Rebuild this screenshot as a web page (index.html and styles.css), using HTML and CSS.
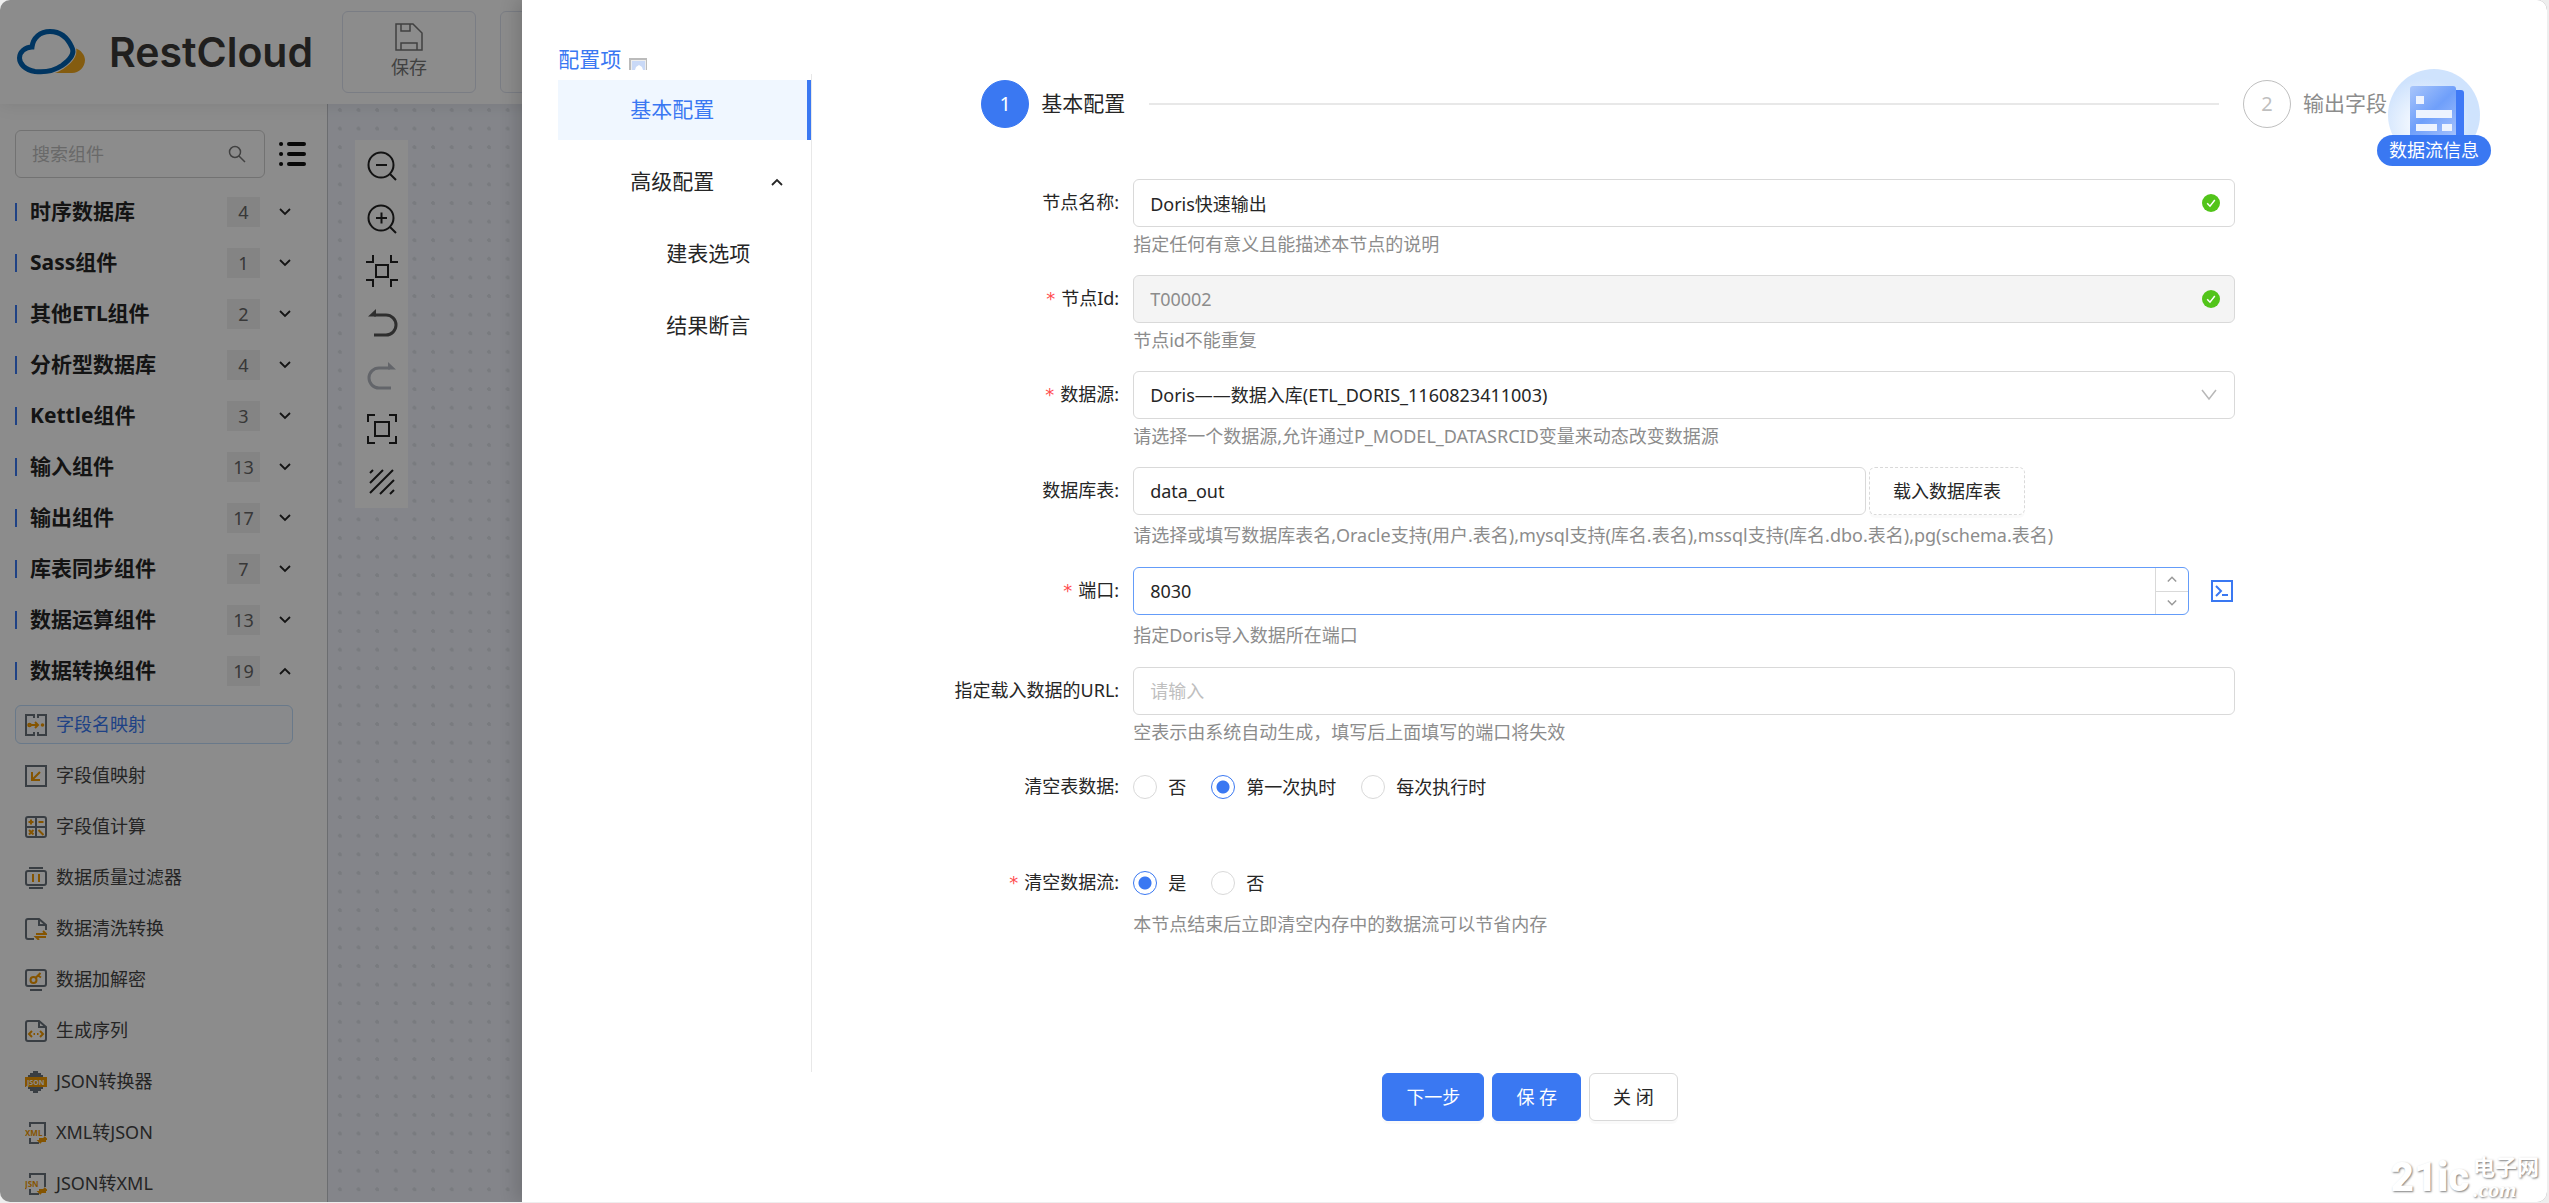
FILE: index.html
```html
<!DOCTYPE html>
<html lang="zh-CN">
<head>
    <meta charset="UTF-8">
    <meta name="viewport" content="width=device-width, initial-scale=1.0">
    <title>RestCloud</title>
    <link rel="stylesheet" href="styles.css">
</head>
<body>

    <!-- Shared icons -->
    <svg class="sprite" aria-hidden="true">
        <symbol id="down" viewBox="0 0 12 12"><path d="m1 3 5 5 5-5" fill="none" stroke="currentColor" stroke-width="1.800"/></symbol>
        <symbol id="up" viewBox="0 0 12 12"><path d="m1 9 5-5 5 5" fill="none" stroke="currentColor" stroke-width="1.800"/></symbol>
        <symbol id="check" viewBox="0 0 18 18"><circle cx="9" cy="9" r="9" fill="#52c41a"/><path d="m5.200 9.200 2.800 3 4.800-6.200" fill="none" stroke="#fff" stroke-width="1.500"/></symbol>
    </svg>

    <div class="app">
        <!-- Top Bar -->
        <header class="topbar">
            <div class="logo">
                <svg class="logo-mark" viewBox="0 0 68 46">
                    <path d="M36 44c12-4 21-13 22-25 6 2 10 7 10 12 0 7-6 13-13 13z" fill="#f0a81e"/>
                    <path d="M15 18C16 9 23 2.500 33 2.500c11 0 18 7 22 16 3 6-3 13-10 18-9 6-19 7-27 6C8 41 2.500 35 2.500 29 2.500 23 8 18 15 18z" fill="#fff" stroke="#fff" stroke-width="7"/>
                    <path d="M15 18C16 9 23 2.500 33 2.500c11 0 18 7 22 16 3 6-3 13-10 18-9 6-19 7-27 6C8 41 2.500 35 2.500 29 2.500 23 8 18 15 18z" fill="#fff" stroke="#0062b1" stroke-width="5"/>
                </svg>
                <span>RestCloud</span>
            </div>
            <button class="tool-card" type="button">
                <svg width="28" height="28" viewBox="0 0 28 28" fill="none" stroke="currentColor" stroke-width="1.500"><path d="M1 1h17l9 9v17H1zM6 1v7h9V1M6 27v-7h16v7"/></svg>
                <span>保存</span>
            </button>
            <button class="tool-card" type="button"></button>
        </header>

        <div class="workspace">
            <!-- Component Sidebar -->
            <aside class="sidebar">
                <div class="search-row">
                    <label class="search">
                        <input type="text" placeholder="搜索组件" aria-label="搜索组件">
                        <svg width="18" height="18" viewBox="0 0 18 18" fill="none" stroke="#777" stroke-width="1.500"><circle cx="7" cy="7" r="5.500"/><path d="m11 11 6 6"/></svg>
                    </label>
                    <button class="list-btn" type="button" aria-label="列表">
                        <svg width="29" height="26" viewBox="0 0 29 26" fill="none" stroke="#111" stroke-width="4" stroke-linecap="round"><path d="M3 3h.1M3 13h.1M3 23h.1M11 3h15M11 13h15M11 23h15"/></svg>
                    </button>
                </div>

                <ul class="groups">
                    <li><b>时序数据库</b><i>4</i><svg><use href="#down"/></svg></li>
                    <li><b>Sass组件</b><i>1</i><svg><use href="#down"/></svg></li>
                    <li><b>其他ETL组件</b><i>2</i><svg><use href="#down"/></svg></li>
                    <li><b>分析型数据库</b><i>4</i><svg><use href="#down"/></svg></li>
                    <li><b>Kettle组件</b><i>3</i><svg><use href="#down"/></svg></li>
                    <li><b>输入组件</b><i>13</i><svg><use href="#down"/></svg></li>
                    <li><b>输出组件</b><i>17</i><svg><use href="#down"/></svg></li>
                    <li><b>库表同步组件</b><i>7</i><svg><use href="#down"/></svg></li>
                    <li><b>数据运算组件</b><i>13</i><svg><use href="#down"/></svg></li>
                    <li><b>数据转换组件</b><i>19</i><svg><use href="#up"/></svg></li>
                </ul>

                <ul class="parts">
                    <li class="active">
                        <svg viewBox="0 0 22 22"><path class="g" d="M9 4V1H1v20h8v-3M13 4V1h8v20h-8v-3"/><path class="o" d="M6 11h7M10 8l3 3-3 3"/><circle class="o" cx="4.500" cy="11" r="1.300"/><circle cx="17.500" cy="11" r="1.800" fill="#f39a00"/></svg>
                        字段名映射
                    </li>
                    <li>
                        <svg viewBox="0 0 22 22"><path class="g" d="M1 1h20v20H1z"/><path class="o" d="M7 7v8h8M7 15l8-8"/></svg>
                        字段值映射
                    </li>
                    <li>
                        <svg viewBox="0 0 22 22"><rect class="g" x="1" y="1" width="20" height="20" rx="2"/><path class="g" d="M11 1v20M1 11h20"/><path class="o" d="M3.500 6h5M6 3.500v5M13.500 6h5M4 14l4.500 4.500M8.500 14 4 18.500M13.500 14l5 5"/></svg>
                        字段值计算
                    </li>
                    <li>
                        <svg viewBox="0 0 22 22"><rect class="g" x="1" y="4" width="20" height="14" rx="2"/><path class="g" d="M4 1h14M4 21h14"/><path class="o" d="M8 7v8M14 7v8"/></svg>
                        数据质量过滤器
                    </li>
                    <li>
                        <svg viewBox="0 0 22 22"><path class="g" d="M9 21H3a2 2 0 0 1-2-2V3a2 2 0 0 1 2-2h11l7 6v5M14 1v6h7"/><path class="o" d="M11 16h10l-3-3M21 19H11l3 3"/></svg>
                        数据清洗转换
                    </li>
                    <li>
                        <svg viewBox="0 0 22 22"><rect class="g" x="1" y="1" width="20" height="16" rx="2"/><path class="g" d="M5 21h12"/><circle class="o" cx="8.500" cy="11" r="3"/><path class="o" d="m10.500 9 5-5M13 6.500l3 2"/></svg>
                        数据加解密
                    </li>
                    <li>
                        <svg viewBox="0 0 22 22"><path class="g" d="M3 1h11l7 6v12a2 2 0 0 1-2 2H3a2 2 0 0 1-2-2V3a2 2 0 0 1 2-2zM14 1v6h7"/><path class="o" d="m7 11-3 3 3 3M15 11l3 3-3 3M8.500 14h1.500M12 14h1.500"/></svg>
                        生成序列
                    </li>
                    <li>
                        <svg viewBox="0 0 22 22"><path d="M8 0h5v2h3v2h2v3H3V4h2V2h3zM3 16h15v2h-2v2h-3v2H8v-2H5v-2H3z" fill="#69727b"/><path d="M0 6h22v10H0z" fill="#f39a00"/><text class="tag light" x="2" y="14">JSON</text></svg>
                        JSON转换器
                    </li>
                    <li>
                        <svg viewBox="0 0 22 22"><path class="g" d="M5 5V1h15v13M5 16v5h9"/><text class="tag" x="0" y="14">XML</text><path class="o" d="M14 17h7l-2-2M21 19h-7l2 2"/></svg>
                        XML转JSON
                    </li>
                    <li>
                        <svg viewBox="0 0 22 22"><path class="g" d="M5 5V1h15v13M5 16v5h9"/><text class="tag" x="0" y="14">JSN</text><path class="o" d="M14 17h7l-2-2M21 19h-7l2 2"/></svg>
                        JSON转XML
                    </li>
                </ul>
            </aside>

            <!-- Flow Canvas -->
            <main class="canvas">
                <div class="toolbar">
                    <button type="button" aria-label="缩小"><svg viewBox="0 0 32 32"><circle cx="15" cy="15" r="12.500"/><path d="M10 15h11M24 24l6 6"/></svg></button>
                    <button type="button" aria-label="放大"><svg viewBox="0 0 32 32"><circle cx="15" cy="15" r="12.500"/><path d="M10 15h11M15.500 9.500v11M24 24l6 6"/></svg></button>
                    <button type="button" aria-label="适应内容"><svg viewBox="0 0 32 32" stroke-width="3"><path d="M10 10h12v12H10zM7 0v7H0M25 0v7h7M7 32v-7H0M25 32v-7h7"/></svg></button>
                    <button type="button" aria-label="撤销"><svg viewBox="0 0 32 32"><path d="M8 7h12a10 10 0 0 1 0 20H8" stroke="#555" stroke-width="3"/><path d="M2 8.500 10 1v7.500z" fill="#555" stroke="none"/></svg></button>
                    <button type="button" aria-label="重做"><svg viewBox="0 0 32 32"><path d="M24 7H13a10 10 0 0 0 0 20h12" stroke="#b4b9c2" stroke-width="3"/><path d="M30 8.500 22 1v7.500z" fill="#b4b9c2" stroke="none"/></svg></button>
                    <button type="button" aria-label="全屏"><svg viewBox="0 0 32 32"><path d="M9 9h14v14H9zM2 9V2h7M23 2h7v7M30 23v7h-7M9 30H2v-7"/></svg></button>
                    <button type="button" aria-label="背景"><svg viewBox="0 0 32 32"><path d="M4 7l3-3M4 17 17 4M4 27 27 4M14 28l14-14M24 28l4-4"/></svg></button>
                </div>
            </main>
        </div>

        <div class="mask"></div>

        <!-- Node Settings Drawer -->
        <section class="drawer">
            <nav class="side">
                <div class="side-title">配置项
                    <svg width="18" height="12" viewBox="0 0 18 12"><path d="M0 0h18v12H0z" fill="#bbb"/><path d="M2 2h15v10H2z" fill="#eee"/><path d="M3 3h13v9H3z" fill="#c9d9f7"/><path d="m6 12 1-3 3-2 3 2 1 3z" fill="#fff"/></svg>
                </div>
                <ul class="menu">
                    <li class="active"><a href="#basic">基本配置</a></li>
                    <li><a href="#advanced">高级配置</a><svg><use href="#up"/></svg></li>
                    <li class="sub"><a href="#table">建表选项</a></li>
                    <li class="sub"><a href="#assert">结果断言</a></li>
                </ul>
            </nav>

            <div class="content">
                <ol class="steps">
                    <li class="current"><span class="num">1</span>基本配置</li>
                    <li class="line"></li>
                    <li><span class="num">2</span>输出字段</li>
                </ol>

                <form class="form">
                    <div class="row">
                        <label class="name" for="nodeName">节点名称:</label>
                        <div class="field"><input id="nodeName" type="text" value="Doris快速输出"><svg class="ok"><use href="#check"/></svg></div>
                        <p class="hint">指定任何有意义且能描述本节点的说明</p>
                    </div>
                    <div class="row">
                        <label class="name required" for="nodeId">节点Id:</label>
                        <div class="field disabled"><input id="nodeId" type="text" value="T00002" disabled><svg class="ok"><use href="#check"/></svg></div>
                        <p class="hint">节点id不能重复</p>
                    </div>
                    <div class="row">
                        <label class="name required" for="source">数据源:</label>
                        <div class="field">
                            <select id="source"><option>Doris——数据入库(ETL_DORIS_1160823411003)</option></select>
                            <svg class="arrow" viewBox="0 0 18 18"><path d="m2 4 7 9 7-9" fill="none" stroke="#b8b8b8" stroke-width="1.500"/></svg>
                        </div>
                        <p class="hint">请选择一个数据源,允许通过P_MODEL_DATASRCID变量来动态改变数据源</p>
                    </div>
                    <div class="row tall">
                        <label class="name" for="tableName">数据库表:</label>
                        <div class="line-group table-line">
                            <div class="field"><input id="tableName" type="text" value="data_out"></div>
                            <button class="btn dashed" type="button">载入数据库表</button>
                        </div>
                        <p class="hint">请选择或填写数据库表名,Oracle支持(用户.表名),mysql支持(库名.表名),mssql支持(库名.dbo.表名),pg(schema.表名)</p>
                    </div>
                    <div class="row tall">
                        <label class="name required" for="port">端口:</label>
                        <div class="line-group port-line">
                            <div class="field focused">
                                <input id="port" type="text" inputmode="numeric" value="8030">
                                <div class="spin">
                                    <button type="button" aria-label="增加"><svg><use href="#up"/></svg></button>
                                    <button type="button" aria-label="减少"><svg><use href="#down"/></svg></button>
                                </div>
                            </div>
                            <svg width="22" height="22" viewBox="0 0 22 22" fill="none" stroke="#3a78f2" stroke-width="2"><path d="M1 1h20v20H1zM5 6l5 5-5 5M11 15h6"/></svg>
                        </div>
                        <p class="hint">指定Doris导入数据所在端口</p>
                    </div>
                    <div class="row">
                        <label class="name" for="url">指定载入数据的URL:</label>
                        <div class="field"><input id="url" type="text" placeholder="请输入"></div>
                        <p class="hint">空表示由系统自动生成，填写后上面填写的端口将失效</p>
                    </div>
                    <div class="row">
                        <span class="name">清空表数据:</span>
                        <div class="radios">
                            <label><input type="radio" name="clearTable">否</label>
                            <label><input type="radio" name="clearTable" checked>第一次执时</label>
                            <label><input type="radio" name="clearTable">每次执行时</label>
                        </div>
                        <p class="hint"></p>
                    </div>
                    <div class="row">
                        <span class="name required">清空数据流:</span>
                        <div class="radios">
                            <label><input type="radio" name="clearFlow" checked>是</label>
                            <label><input type="radio" name="clearFlow">否</label>
                        </div>
                        <p class="hint">本节点结束后立即清空内存中的数据流可以节省内存</p>
                    </div>
                </form>

                <div class="actions">
                    <button class="btn primary" type="button">下一步</button>
                    <button class="btn primary" type="button">保 存</button>
                    <button class="btn" type="button">关 闭</button>
                </div>
            </div>

            <button class="flow-info" type="button">
                <svg width="92" height="92" viewBox="0 0 92 92">
                    <defs>
                        <radialGradient id="halo" cx=".4" cy=".6"><stop offset="0" stop-color="#fff"/><stop offset="1" stop-color="#cfe3fd"/></radialGradient>
                        <linearGradient id="doc" x2=".7" y2="1"><stop offset="0" stop-color="#a9c6fb"/><stop offset=".5" stop-color="#6f9ffa"/><stop offset="1" stop-color="#a3c0fc"/></linearGradient>
                    </defs>
                    <circle cx="46" cy="46" r="46" fill="url(#halo)"/>
                    <rect x="60" y="21" width="16" height="60" rx="3" fill="#3f79f6"/>
                    <rect x="22" y="17" width="46" height="62" rx="3" fill="url(#doc)"/>
                    <path d="M28 27h8v8h-8zM28 41h36v8H28zM28 55h21v7H28zM54 55h10v7H54z" fill="#edf3fe"/>
                </svg>
                <span>数据流信息</span>
            </button>
        </section>

        <div class="watermark">
            <strong>21ic</strong>
            <div><span>电子网</span><em>.com</em></div>
        </div>
    </div>

</body>
</html>
```
FILE: styles.css
```css
/* Reset & Global Styles */
* {
    margin: 0;
    padding: 0;
    box-sizing: border-box;
}

body {
    background: #eee;
    color: #262626;
    font-family: "Noto Sans", "Noto Sans CJK SC", sans-serif;
    font-size: 18px;
    line-height: 1.5;
}

ul,
ol {
    list-style: none;
}

a {
    color: inherit;
    text-decoration: none;
}

button,
input,
select {
    font: inherit;
    color: inherit;
    border: 0;
    background: none;
    outline: none;
}

.sprite {
    display: none;
}

.app {
    display: flex;
    flex-direction: column;
    position: relative;
    height: calc(100vh - 1px);
    margin-right: 2px;
    overflow: hidden;
    background: #fff;
    border-radius: 10px;
}

/* Top Bar */
.topbar {
    display: flex;
    align-items: center;
    flex: 0 0 104px;
    gap: 24px;
    padding: 0 17px;
    position: relative;
    z-index: 1;
    box-shadow: 0 2px 16px rgba(0, 0, 0, 0.08);
}

.logo {
    display: flex;
    align-items: center;
    gap: 24px;
    width: 301px;
    font-family: Inter, sans-serif;
    font-size: 41px;
    font-weight: 600;
    line-height: 48px;
    color: #3b3a38;
}

.logo-mark {
    width: 68px;
    height: 46px;
    overflow: visible;
}

.tool-card {
    display: flex;
    flex-direction: column;
    align-items: center;
    justify-content: center;
    gap: 3px;
    width: 134px;
    height: 82px;
    border: 1px solid #dfe3f0;
    border-radius: 6px;
    color: #777;
}

/* Component Sidebar */
.workspace {
    display: flex;
    flex: 1;
    min-height: 0;
}

.sidebar {
    width: 328px;
    padding: 26px 19px 0 15px;
    border-right: 1px solid #c4c6cc;
    overflow: hidden;
}

.search-row {
    display: flex;
    align-items: center;
    gap: 13px;
    margin-bottom: 8px;
}

.search {
    display: flex;
    align-items: center;
    width: 250px;
    height: 48px;
    padding: 0 18px 0 16px;
    border: 1px solid #d0d0d0;
    border-radius: 6px;
}

.search input {
    flex: 1;
    min-width: 0;
}

::placeholder {
    color: #bfbfbf;
}

.list-btn {
    display: flex;
}

.groups li {
    display: flex;
    align-items: center;
    height: 51px;
    padding-right: 17px;
}

.groups li::before {
    content: "";
    width: 2px;
    height: 18px;
    margin-right: 13px;
    background: #3a78f2;
}

.groups b {
    flex: 1;
    font-size: 21px;
}

.groups i {
    width: 33px;
    margin-right: 19px;
    font-style: normal;
    line-height: 30px;
    text-align: center;
    color: #666;
    background: #f0f0f0;
}

.groups svg,
.menu svg {
    width: 12px;
    height: 12px;
}

.parts {
    padding-top: 9px;
}

.parts li {
    display: flex;
    align-items: center;
    gap: 9px;
    width: 278px;
    height: 39px;
    margin-bottom: 12px;
    padding-left: 9px;
    border: 1px solid transparent;
    border-radius: 6px;
    color: #444;
}

.parts .active {
    color: #3a78f2;
    background: #f9fcff;
    border-color: #bfdcfb;
}

.parts svg {
    width: 22px;
    height: 22px;
    fill: none;
    stroke-width: 2;
}

.g {
    stroke: #69727b;
}

.o {
    stroke: #f39a00;
}

.tag {
    font-size: 8px;
    font-weight: 700;
    fill: #f39a00;
}

.light {
    font-size: 7px;
    fill: #fff;
}

/* Flow Canvas */
.canvas {
    flex: 1;
    padding: 36px 27px;
    background-color: #f0f3fb;
    background-image: radial-gradient(circle at 12px 6px, #dde0e8 2px, transparent 2px);
    background-size: calc(100% / 119) calc(100% / 59);
}

.toolbar {
    display: flex;
    flex-direction: column;
    align-items: center;
    justify-content: space-between;
    width: 53px;
    height: 368px;
    padding: 10px 0;
    background: #fff;
}

.toolbar svg {
    display: block;
    width: 32px;
    height: 32px;
    fill: none;
    stroke: #222;
    stroke-width: 2;
}

/* Drawer */
.mask {
    position: absolute;
    inset: 0;
    z-index: 2;
    background: rgba(0, 0, 0, 0.45);
}

.drawer {
    display: flex;
    position: absolute;
    top: 0;
    right: 0;
    bottom: 0;
    z-index: 3;
    width: 79.5%;
    padding-left: 36px;
    background: #fff;
    box-shadow: -6px 0 16px rgba(0, 0, 0, 0.15);
}

.side {
    flex: 0 0 254px;
    padding-top: 44px;
    font-size: 21px;
}

.side-title {
    display: flex;
    align-items: flex-end;
    gap: 8px;
    height: 30px;
    line-height: 30px;
    color: #3a78f2;
}

.side-title svg {
    margin-bottom: 4px;
}

.menu {
    height: 83vh;
    padding-top: 6px;
    border-right: 1px solid #e8e8e8;
}

.menu li {
    display: flex;
    align-items: center;
    justify-content: space-between;
    height: 60px;
    margin-bottom: 12px;
    padding: 0 28px 0 72px;
}

.menu .sub {
    padding-left: 108px;
}

.menu .active {
    color: #3a78f2;
    background: #f0f7ff;
    border-right: 4px solid #3a78f2;
}

.content {
    flex: 1;
    padding-top: 80px;
}

/* Steps */
.steps {
    display: flex;
    padding: 0 160px 0 169px;
    font-size: 21px;
}

.steps li {
    display: flex;
    align-items: center;
    gap: 12px;
    color: #8c8c8c;
}

.steps .num {
    width: 48px;
    height: 48px;
    border: 1px solid #bfbfbf;
    border-radius: 50%;
    font-size: 20px;
    line-height: 46px;
    text-align: center;
    color: #bfbfbf;
}

.steps .current {
    color: #262626;
}

.current .num {
    color: #fff;
    background: #3a78f2;
    border-color: #3a78f2;
}

.steps .line {
    flex: 1;
    align-self: center;
    height: 2px;
    margin: 0 24px;
    background: #e8e8e8;
}

/* Form */
.form {
    padding: 51px 312px 0 0;
}

.row {
    display: grid;
    grid-template-columns: 307px 1fr;
    grid-template-rows: 48px auto;
    column-gap: 14px;
    height: 96px;
}

.tall {
    height: 100px;
}

.name {
    line-height: 46px;
    text-align: right;
}

.required::before {
    content: "*";
    margin-right: 6px;
    font-family: "DejaVu Sans", sans-serif;
    color: #ff4d4f;
}

.hint {
    grid-column: 2;
    line-height: 34px;
    color: #8c8c8c;
}

.tall .hint {
    line-height: 40px;
}

.field {
    display: flex;
    align-items: center;
    flex: 1;
    border: 1px solid #d9d9d9;
    border-radius: 6px;
}

.field input,
.field select {
    flex: 1;
    min-width: 0;
    height: 46px;
    padding: 0 16px;
    appearance: none;
}

.field .ok,
.field .arrow {
    width: 18px;
    height: 18px;
    margin-right: 14px;
}

.field .arrow {
    margin-right: 16px;
}

.disabled {
    color: #8c8c8c;
    background: #f4f4f4;
}

.focused {
    border-color: #649cf9;
}

.line-group {
    display: flex;
    align-items: center;
}

.table-line {
    gap: 3px;
    padding-right: 210px;
}

.port-line {
    gap: 22px;
    padding-right: 2px;
}

.spin {
    display: grid;
    width: 33px;
    height: 46px;
    border-left: 1px solid #d9d9d9;
    color: #999;
}

.spin button + button {
    border-top: 1px solid #d9d9d9;
}

.spin button {
    display: flex;
    align-items: center;
    justify-content: center;
}

.spin svg {
    width: 10px;
    height: 10px;
}

.radios {
    display: flex;
    align-items: center;
    gap: 25px;
}

.radios label {
    display: flex;
    align-items: center;
    gap: 11px;
}

.radios input {
    width: 24px;
    height: 24px;
    border: 1px solid #d9d9d9;
    border-radius: 50%;
    appearance: none;
}

.radios input:checked {
    border-color: #3a78f2;
    background: radial-gradient(circle, #3a78f2 6px, transparent 7px);
}

/* Buttons */
.btn {
    height: 48px;
    padding: 0 23px;
    border: 1px solid #d9d9d9;
    border-radius: 6px;
    box-shadow: 0 3px 0 rgba(0, 0, 0, 0.02);
}

.dashed {
    border-style: dashed;
}

.primary {
    color: #fff;
    background: #3a78f2;
    border-color: #3a78f2;
}

.actions {
    display: flex;
    justify-content: center;
    gap: 8px;
    padding: 118px 299px 0 0;
}

/* Data Flow Badge */
.flow-info {
    display: grid;
    justify-items: center;
    position: absolute;
    top: 69px;
    right: 56px;
}

.flow-info svg,
.flow-info span {
    grid-area: 1 / 1;
}

.flow-info span {
    align-self: end;
    margin-bottom: -5px;
    padding: 0 12px;
    border-radius: 16px;
    line-height: 31px;
    color: #fff;
    background: #3a78f2;
}

/* Watermark */
.watermark {
    display: flex;
    align-items: center;
    gap: 4px;
    position: absolute;
    right: 8px;
    bottom: 0;
    z-index: 4;
    color: #fff;
    text-shadow: 1px 1px 2px rgba(0, 0, 0, 0.5);
}

.watermark strong {
    font-family: Roboto, sans-serif;
    font-size: 40px;
    font-weight: 900;
    line-height: 48px;
}

.watermark div {
    display: grid;
    font-size: 22px;
    font-weight: 700;
    line-height: 24px;
}

.watermark em {
    font-family: "Liberation Serif", serif;
    font-size: 22px;
    line-height: 24px;
}
```
